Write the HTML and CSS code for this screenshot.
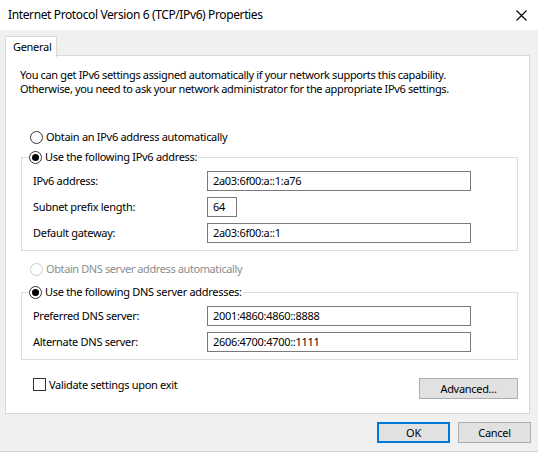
FILE: index.html
```html
<!DOCTYPE html>
<html>
<head>
<meta charset="utf-8">
<link rel="stylesheet" href="styles.css">
</head>
<body>
<div class="window">
  <div class="titlebar">
    <span class="title">Internet Protocol Version 6 (TCP/IPv6) Properties</span>
    <svg class="close" width="11" height="11" viewBox="0 0 11 11"><path d="M0.5 0.5L10.5 10.5M10.5 0.5L0.5 10.5" stroke="#000" stroke-width="1.1" fill="none"/></svg>
  </div>
  <div class="client">
    <div class="tabs"><div class="tab">General</div></div>
    <div class="panel">
      <p class="intro">You can get IPv6 settings assigned automatically if your network supports this capability.<br>Otherwise, you need to ask your network administrator for the appropriate IPv6 settings.</p>
      <div class="option first"><span class="radio"></span><span>Obtain an IPv6 address automatically</span></div>
      <fieldset class="group group-ip">
        <legend class="option"><span class="radio checked"></span><span>Use the following IPv6 address:</span></legend>
        <div class="group-body">
          <div class="field"><span class="label">IPv6 address:</span><span class="input wide">2a03:6f00:a::1:a76</span></div>
          <div class="field"><span class="label">Subnet prefix length:</span><span class="input short">64</span></div>
          <div class="field"><span class="label">Default gateway:</span><span class="input wide">2a03:6f00:a::1</span></div>
        </div>
      </fieldset>
      <div class="option dns-auto disabled"><span class="radio"></span><span>Obtain DNS server address automatically</span></div>
      <fieldset class="group group-dns">
        <legend class="option"><span class="radio checked"></span><span>Use the following DNS server addresses:</span></legend>
        <div class="group-body">
          <div class="field"><span class="label">Preferred DNS server:</span><span class="input wide">2001:4860:4860::8888</span></div>
          <div class="field"><span class="label">Alternate DNS server:</span><span class="input wide">2606:4700:4700::1111</span></div>
        </div>
      </fieldset>
      <div class="bottom-row">
        <div class="check"><span class="checkbox"></span><span>Validate settings upon exit</span></div>
        <button class="btn advanced">Advanced...</button>
      </div>
    </div>
    <div class="footer">
      <button class="btn default">OK</button>
      <button class="btn">Cancel</button>
    </div>
  </div>
</div>
</body>
</html>
```
FILE: styles.css
```css
* { box-sizing: border-box; }
html, body { margin: 0; padding: 0; }
body {
  width: 538px;
  height: 452px;
  overflow: hidden;
  font-family: "Noto Sans", "Open Sans", sans-serif;
  font-size: 11px;
  letter-spacing: -0.3px;
  color: #000;
  background: #f0f0f0;
}
.window {
  width: 538px;
  height: 452px;
  display: flex;
  flex-direction: column;
  border-bottom: 1px solid #d4d4d4;
}
.titlebar {
  height: 30px;
  background: #fff;
  display: flex;
  align-items: center;
  justify-content: space-between;
  padding: 0 11px 0 8px;
  flex: none;
}
.title { font-size: 12px; letter-spacing: -0.38px; line-height: 16px; }
.close { display: block; }
.client {
  flex: 1;
  background: #f0f0f0;
  padding: 6px 8px 0 5px;
  display: flex;
  flex-direction: column;
}
.tabs { display: flex; height: 20px; position: relative; z-index: 1; margin-bottom: -1px; }
.tab {
  width: 52px;
  height: 21px;
  background: #fff;
  border: 1px solid #d9d9d9;
  border-bottom: none;
  padding: 2px 0 0 7px;
  line-height: 15px;
}
.panel {
  height: 359px;
  background: #fff;
  border: 1px solid #d9d9d9;
  padding: 0 12px 0 14px;
  display: flex;
  flex-direction: column;
}
.intro {
  margin: 12px 0 0 0;
  line-height: 14px;
  letter-spacing: -0.35px;
  white-space: nowrap;
}
.option {
  display: flex;
  align-items: center;
  height: 16px;
  line-height: 16px;
  white-space: nowrap;
}
.option.first { margin: 33px 0 0 10px; }
.radio {
  width: 13px;
  height: 13px;
  border: 1px solid #333;
  border-radius: 50%;
  background: #fff;
  margin-right: 3px;
  flex: none;
  display: flex;
  align-items: center;
  justify-content: center;
}
.radio.checked::after {
  content: "";
  width: 7px;
  height: 7px;
  border-radius: 50%;
  background: #000;
}
.disabled { color: #8d8d8d; letter-spacing: -0.4px; }
.disabled .radio { border-color: #cccccc; }
.group {
  margin: 4px 0 0 1px;
  width: 497px;
  padding: 0;
  border: 1px solid #dcdcdc;
  min-width: 0;
}
.group legend {
  padding: 0 1px 0 0;
  margin-left: 7px;
  background: #fff;
}
.group-body {
  padding: 6px 0 7px 11px;
  display: flex;
  flex-direction: column;
  gap: 6px;
}
.field { display: flex; align-items: center; height: 20px; }
.label { width: 174px; flex: none; line-height: 16px; }
.input {
  height: 20px;
  border: 1px solid #7a7a7a;
  background: #fff;
  padding: 0 0 0 5px;
  line-height: 18px;
  white-space: nowrap;
}
.input.wide { width: 264px; }
.input.short { width: 30px; }
.dns-auto { margin: 10px 0 0 10px; }
.group-dns { margin-top: 7px; }
.bottom-row {
  margin-top: 18px;
  display: flex;
  justify-content: space-between;
  align-items: flex-start;
  width: 498px;
}
.check {
  display: flex;
  align-items: center;
  height: 13px;
  margin-left: 13px;
  white-space: nowrap;
  line-height: 16px;
}
.checkbox {
  width: 13px;
  height: 13px;
  border: 1px solid #333;
  background: #fff;
  margin-right: 3px;
  flex: none;
}
.btn {
  font-family: inherit;
  font-size: 11px;
  letter-spacing: -0.3px;
  color: #000;
  height: 21px;
  background: #e1e1e1;
  border: 1px solid #adadad;
  padding: 0;
  margin: 0;
  line-height: 17px;
}
.advanced { width: 99px; }
.footer {
  display: flex;
  justify-content: flex-end;
  gap: 8px;
  margin-top: 8px;
  margin-right: -1px;
}
.footer .btn { width: 73px; }
.btn.default { border: 2px solid #0078d7; }
```
